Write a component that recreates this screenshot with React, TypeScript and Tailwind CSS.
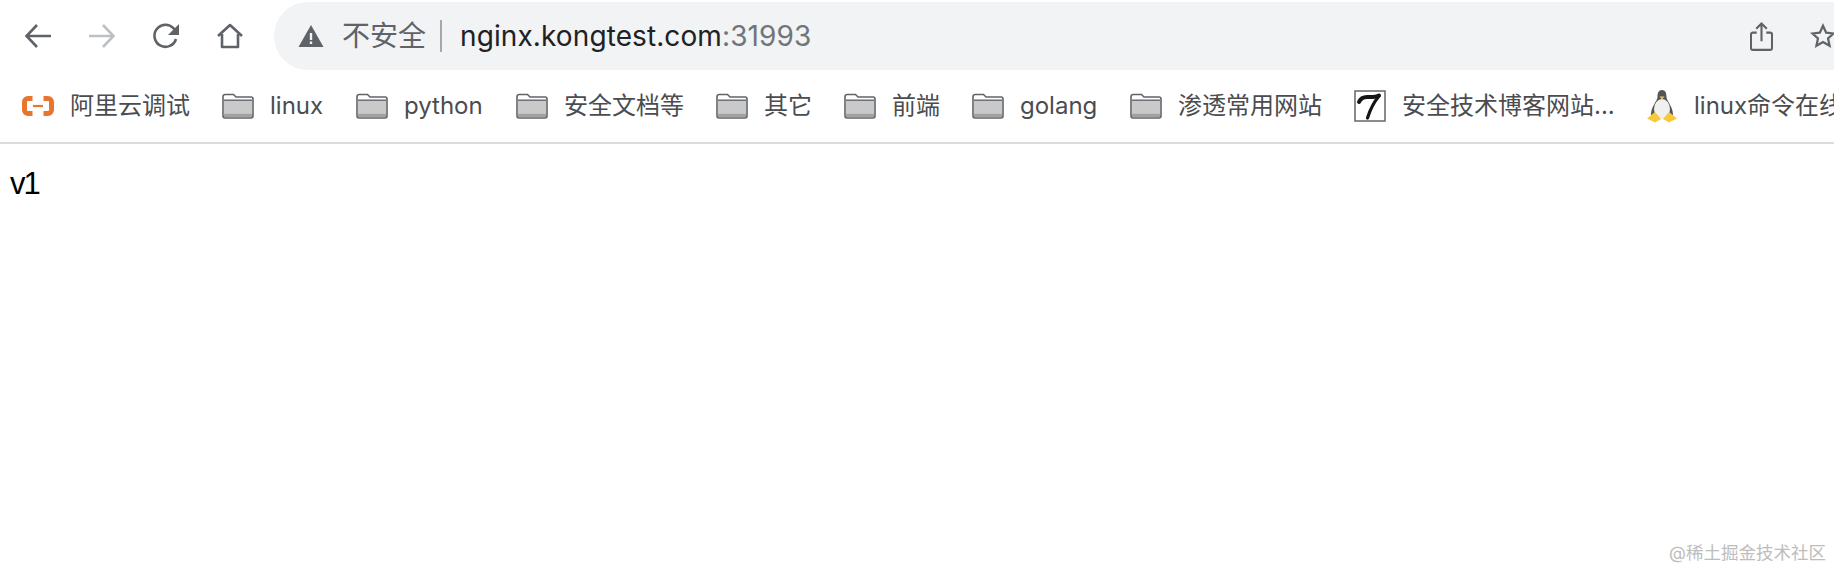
const CJK = "font-['Inter','Noto_Sans_CJK_SC',sans-serif]";

function Folder() {
  return (
    <svg width="32" height="26" viewBox="0 0 32 26" className="shrink-0">
      <path d="M1 3.500a2 2 0 0 1 2-2h8.500l2.500 2.500h15a2 2 0 0 1 2 2v17a2 2 0 0 1-2 2H3a2 2 0 0 1-2-2z" fill="#fff" stroke="#5f6368" strokeWidth="1.6" />
      <path d="M2 8h28v12.500H2z" fill="#c9c9c9" />
      <path d="M2 7.200h28" stroke="#5f6368" strokeWidth="1.4" />
      <path d="M2 20.500h28V24H2z" fill="#a2a2a2" />
    </svg>
  );
}

function Ali() {
  return (
    <svg width="32" height="20" viewBox="0 0 32 20" className="shrink-0">
      <path d="M10.500 2.500H6A3.500 3.500 0 0 0 2.500 6v8A3.500 3.500 0 0 0 6 17.500h4.500" fill="none" stroke="#e8752f" strokeWidth="5" strokeLinejoin="round" />
      <path d="M21.500 2.500H26A3.500 3.500 0 0 1 29.500 6v8a3.500 3.500 0 0 1-3.500 3.500h-4.500" fill="none" stroke="#e8752f" strokeWidth="5" strokeLinejoin="round" />
      <path d="M11 10h10" stroke="#e8752f" strokeWidth="2.200" />
    </svg>
  );
}

function Seven() {
  return (
    <svg width="32" height="32" viewBox="0 0 32 32" className="shrink-0">
      <rect x="1" y="1" width="30" height="30" fill="#fff" stroke="#666" strokeWidth="1.500" />
      <path d="M5 12c1.500-3.500 4-5 8-5 4 0 8.500.5 12-1.500" fill="none" stroke="#151515" strokeWidth="4" strokeLinecap="round" />
      <path d="M25 6C20 12 16 20 13.500 28" fill="none" stroke="#151515" strokeWidth="3.200" strokeLinecap="round" />
    </svg>
  );
}

function Tux() {
  return (
    <svg width="30" height="34" viewBox="0 0 30 34" className="shrink-0">
      <path d="M15 1c-3.500 0-4.500 3-4.500 7 0 4-6.500 9-6.500 18h22c0-9-6.500-14-6.500-18 0-4-1-7-4.500-7z" fill="#555" />
      <ellipse cx="15" cy="20" rx="8" ry="10" fill="#f0f0f0" />
      <path d="M12.500 7.500h5L15 10.500z" fill="#e8c75a" />
      <path d="M0 29.500 8 23l6 7-6 3.500zM30 29.500 22 23l-6 7 6 3.500z" fill="#f6c83c" />
    </svg>
  );
}

function BookmarkText({ children, w }: { children: string; w: string }) {
  return <span className={`ml-4 text-[24px] leading-8 whitespace-nowrap text-[#4a4c4f] ${w}`}>{children}</span>;
}

export default function App() {
  return (
    <div className={`relative h-[568px] w-[1834px] overflow-hidden bg-white ${CJK}`}>
      <div className="box-border flex h-[70px] items-center pt-[2px]">
        <div className="flex h-[68px] w-[274px] shrink-0 items-center gap-[36px] pl-[24px]">
          <svg width="28" height="26" viewBox="0 0 28 26" fill="none" stroke="#5f6368" strokeWidth="2.6" className="shrink-0">
            <path d="M27 13H3M13 2 2.500 13 13 24" />
          </svg>
          <svg width="28" height="26" viewBox="0 0 28 26" fill="none" stroke="#bdc1c6" strokeWidth="2.6" className="shrink-0">
            <path d="M1 13h24M15 2l10.500 11L15 24" />
          </svg>
          <svg width="28" height="28" viewBox="0 0 28 28" fill="none" className="shrink-0">
            <path d="M24 17a11 11 0 1 1-2.600-10.800L25 9.500" stroke="#5f6368" strokeWidth="2.600" />
            <path d="M27 2v11H16z" fill="#5f6368" />
          </svg>
          <svg width="28" height="26" viewBox="0 0 28 26" fill="none" stroke="#5f6368" strokeWidth="2.6" strokeLinejoin="round" className="shrink-0">
            <path d="M2 13 14 2l12 11M6 11v13h16V11" />
          </svg>
        </div>
        <div className="flex h-[68px] min-w-0 flex-1 items-center rounded-l-[34px] bg-[#f1f3f4] pl-[24px]">
          <svg width="26" height="24" viewBox="0 0 26 24" className="shrink-0">
            <path d="M13 1 25.500 23H.5z" fill="#5f6368" />
            <path d="M11.800 9h2.400v7h-2.400zM11.800 17.500h2.400v2.400h-2.400z" fill="#f1f3f4" />
          </svg>
          <span className="ml-[18px] text-[28px] leading-8 whitespace-nowrap text-[#5f6368]">不安全</span>
          <span className="ml-[14px] h-[32px] w-[2px] bg-[#a5a7aa]" />
          <span className="ml-[18px] text-[28px] tracking-[0.1px] leading-8 whitespace-nowrap text-[#202124]">
            nginx.kongtest.com<span className="text-[#70757a]">:31993</span>
          </span>
          <div className="ml-auto flex items-center gap-[37px]">
            <svg width="23" height="29" viewBox="0 0 24 30" fill="none" stroke="#5f6368" strokeWidth="2.2" className="shrink-0">
              <path d="M7 11H3a2 2 0 0 0-2 2v14a2 2 0 0 0 2 2h18a2 2 0 0 0 2-2V13a2 2 0 0 0-2-2h-4M12 20V2M6.500 7 12 1.500 17.500 7" />
            </svg>
            <svg width="26" height="28" viewBox="0 0 28 28" fill="none" stroke="#5f6368" strokeWidth="2.4" className="mr-[-2px] shrink-0">
              <path d="m14 3 3.400 7.400 8 .9-6 5.400 1.700 7.900L14 20.600 6.900 24.600l1.700-7.900-6-5.400 8-.9z" />
            </svg>
          </div>
        </div>
      </div>
      <div className="flex h-[74px] items-center overflow-hidden border-b-2 border-[#dadce0] pl-[22px]">
        <div className="flex shrink-0 items-center"><Ali /><BookmarkText w="w-[119px]">阿里云调试</BookmarkText></div>
        <div className="ml-[33px] flex shrink-0 items-center"><Folder /><BookmarkText w="w-[52px]">linux</BookmarkText></div>
        <div className="ml-[34px] flex shrink-0 items-center"><Folder /><BookmarkText w="w-[78px]">python</BookmarkText></div>
        <div className="ml-[34px] flex shrink-0 items-center"><Folder /><BookmarkText w="w-[119px]">安全文档等</BookmarkText></div>
        <div className="ml-[33px] flex shrink-0 items-center"><Folder /><BookmarkText w="w-[47px]">其它</BookmarkText></div>
        <div className="ml-[33px] flex shrink-0 items-center"><Folder /><BookmarkText w="w-[47px]">前端</BookmarkText></div>
        <div className="ml-[33px] flex shrink-0 items-center"><Folder /><BookmarkText w="w-[76px]">golang</BookmarkText></div>
        <div className="ml-[34px] flex shrink-0 items-center"><Folder /><BookmarkText w="w-[143px]">渗透常用网站</BookmarkText></div>
        <div className="ml-[33px] flex shrink-0 items-center"><Seven /><BookmarkText w="w-[209px]">安全技术博客网站...</BookmarkText></div>
        <div className="ml-[36px] flex shrink-0 items-center"><Tux /><span className="ml-[17px] w-[160px] text-[24px] leading-8 whitespace-nowrap text-[#4a4c4f]">linux命令在线</span></div>
      </div>
      <p className="pt-[24px] pl-[10px] font-['Liberation_Sans','Noto_Sans_CJK_SC',sans-serif] text-[31px] tracking-[-2px] leading-8 text-black">v1</p>
      <span className="absolute top-[541px] right-[8px] text-[17.500px] leading-6 whitespace-nowrap text-[#bdbdbd]">@稀土掘金技术社区</span>
    </div>
  );
}
